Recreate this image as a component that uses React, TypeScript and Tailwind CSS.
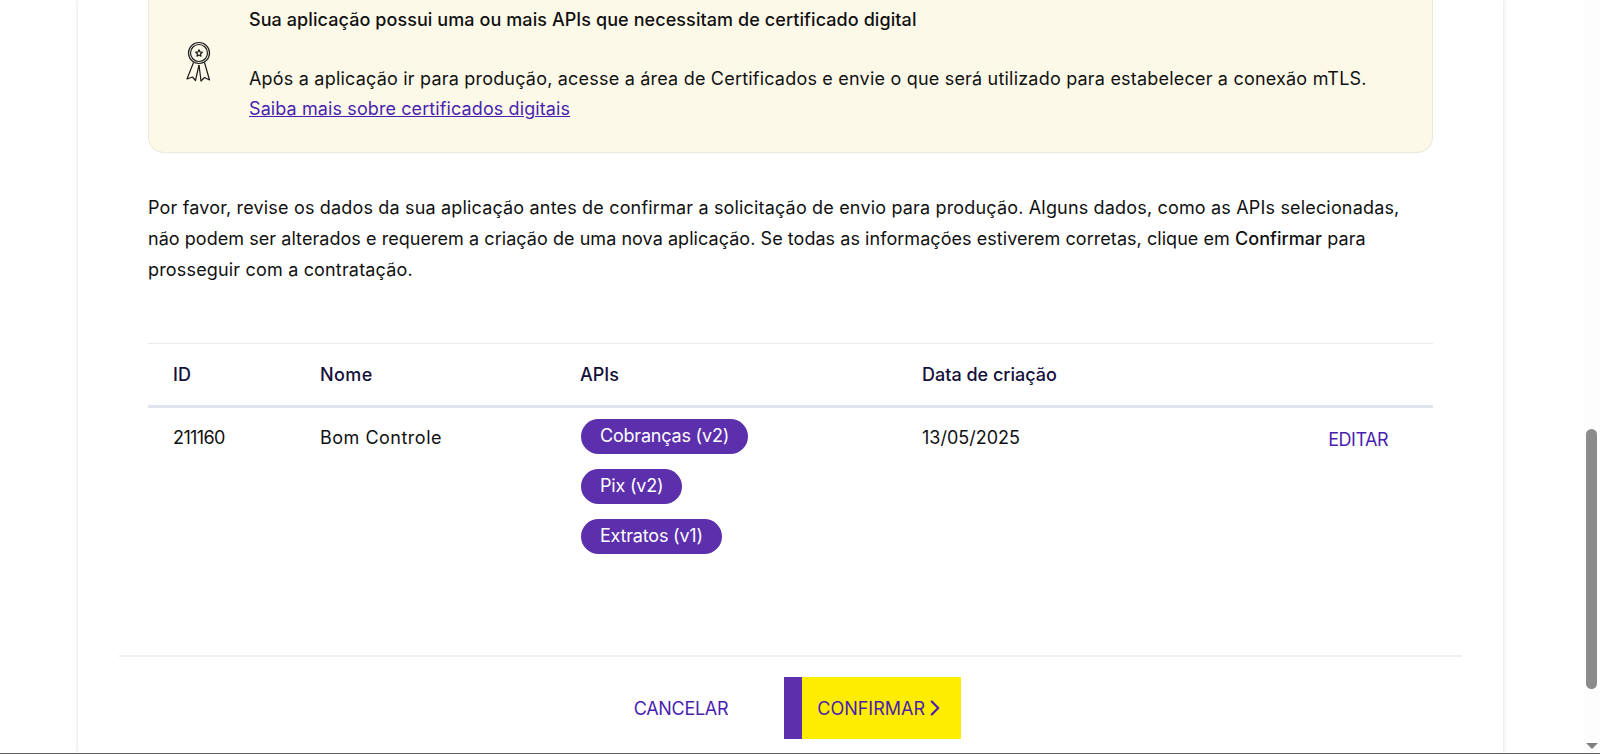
import React from 'react';
import { ChevronRight } from 'lucide-react';

const apis = ['Cobranças (v2)', 'Pix (v2)', 'Extratos (v1)'];

const RibbonIcon = () => (
  <svg width="28" height="44" viewBox="0 0 28 44" fill="none" stroke="#1a1a1a" strokeWidth="1.2" strokeLinejoin="round">
    <circle cx="14" cy="12" r="10.5" />
    <circle cx="14" cy="12" r="8.5" />
    <path d="M14 8.8l1 2.1 2.3.3-1.7 1.6.4 2.3-2-1.1-2 1.1.4-2.3-1.7-1.6 2.3-.3z" />
    <path d="M8.500 21.500L2 38l5.500-2 3 3.500 3.500-15.500" />
    <path d="M19.500 21.500L24.500 39l-5-2.500-3.500 3.500-2-16" />
  </svg>
);

const App = () => {
  return (
    <div className="h-[754px] w-[1600px] overflow-hidden bg-white border-b border-[#5f5f5f] flex font-['Inter',sans-serif] text-[#111]">
      <div className="flex-1 flex justify-center pl-[78px] pr-[80px]">
        <main className="w-[1425px] h-full flex flex-col shadow-[0_0_4px_rgba(0,0,0,0.16)] px-[42px]">
          <section className="mx-[28px] h-[153px] flex rounded-b-2xl border border-t-0 border-[#ebe8dc] bg-[#fdf9e9]">
            <div className="w-[100px] shrink-0 flex justify-center pt-[41px]">
              <RibbonIcon />
            </div>
            <div className="text-[18px] leading-[30px]">
              <p className="font-medium pt-[5px] tracking-[0.08px]">Sua aplicação possui uma ou mais APIs que necessitam de certificado digital</p>
              <p className="mt-[29px] tracking-[0.2px]">Após a aplicação ir para produção, acesse a área de Certificados e envie o que será utilizado para estabelecer a conexão mTLS.</p>
              <a className="text-[#4a1fb0] underline tracking-[0.1px]">Saiba mais sobre certificados digitais</a>
            </div>
          </section>

          <p className="mx-[28px] mt-[39px] text-[18px] leading-[31px] tracking-[0.17px]">
            Por favor, revise os dados da sua aplicação antes de confirmar a solicitação de envio para produção. Alguns dados, como as APIs selecionadas,
            <br />
            <span className="tracking-[0.05px]">
              não podem ser alterados e requerem a criação de uma nova aplicação. Se todas as informações estiverem corretas, clique em <strong className="font-medium">Confirmar</strong> para
            </span>
            <br />
            prosseguir com a contratação.
          </p>

          <div className="mx-[28px] mt-[58px] text-[18px]">
            <div className="h-[65px] grid grid-cols-[147px_260px_342px_1fr] items-center pl-[25px] border-t border-b-[3px] border-t-[#e9eaee] border-b-[#dfe3ec] font-medium text-[#14103a]">
              <span>ID</span>
              <span className="tracking-[0.4px]">Nome</span>
              <span>APIs</span>
              <span>Data de criação</span>
            </div>
            <div className="grid grid-cols-[147px_260px_342px_1fr_auto] pl-[25px] pr-[45px] pt-[11px] h-[247px]">
              <span className="leading-[37px] tracking-[-0.6px]">211160</span>
              <span className="leading-[37px] tracking-[0.5px]">Bom Controle</span>
              <div className="flex flex-col items-start gap-[15px] pl-[1px]">
                {apis.map((api) => (
                  <span key={api} className="h-[35px] px-[19px] rounded-full bg-[#5c2fac] text-white leading-[34px] tracking-[-0.2px]">
                    {api}
                  </span>
                ))}
              </div>
              <span className="leading-[37px]">13/05/2025</span>
              <a className="leading-[41px] text-[#4a1fb0] tracking-[-0.5px]">EDITAR</a>
            </div>
          </div>

          <footer className="-mx-[1px] border-t-2 border-[#f0f0f0] flex justify-center gap-[56px] pt-[20px] pl-[14px]">
            <button className="text-[18px] text-[#4a1fb0] h-[62px] tracking-[-0.3px]">CANCELAR</button>
            <button className="h-[62px] w-[177px] flex items-stretch bg-[#ffed00] text-[18px] text-[#4a1fb0]">
              <span className="w-[18px] bg-[#5c2fac]" />
              <span className="flex-1 flex items-center pl-[15px]">
                CONFIRMAR
                <ChevronRight size={26} strokeWidth={2} className="-ml-[3px]" />
              </span>
            </button>
          </footer>
        </main>
      </div>
      <div className="w-[17px] shrink-0 bg-[#fdfdfd] flex flex-col items-center">
        <div className="mt-[429px] w-[11px] h-[260px] rounded-full bg-[#8b8b8b]" />
        <div className="mt-auto mb-[4px] w-0 h-0 border-x-[6px] border-x-transparent border-t-[6px] border-t-[#808080]" />
      </div>
    </div>
  );
};

export default App;
